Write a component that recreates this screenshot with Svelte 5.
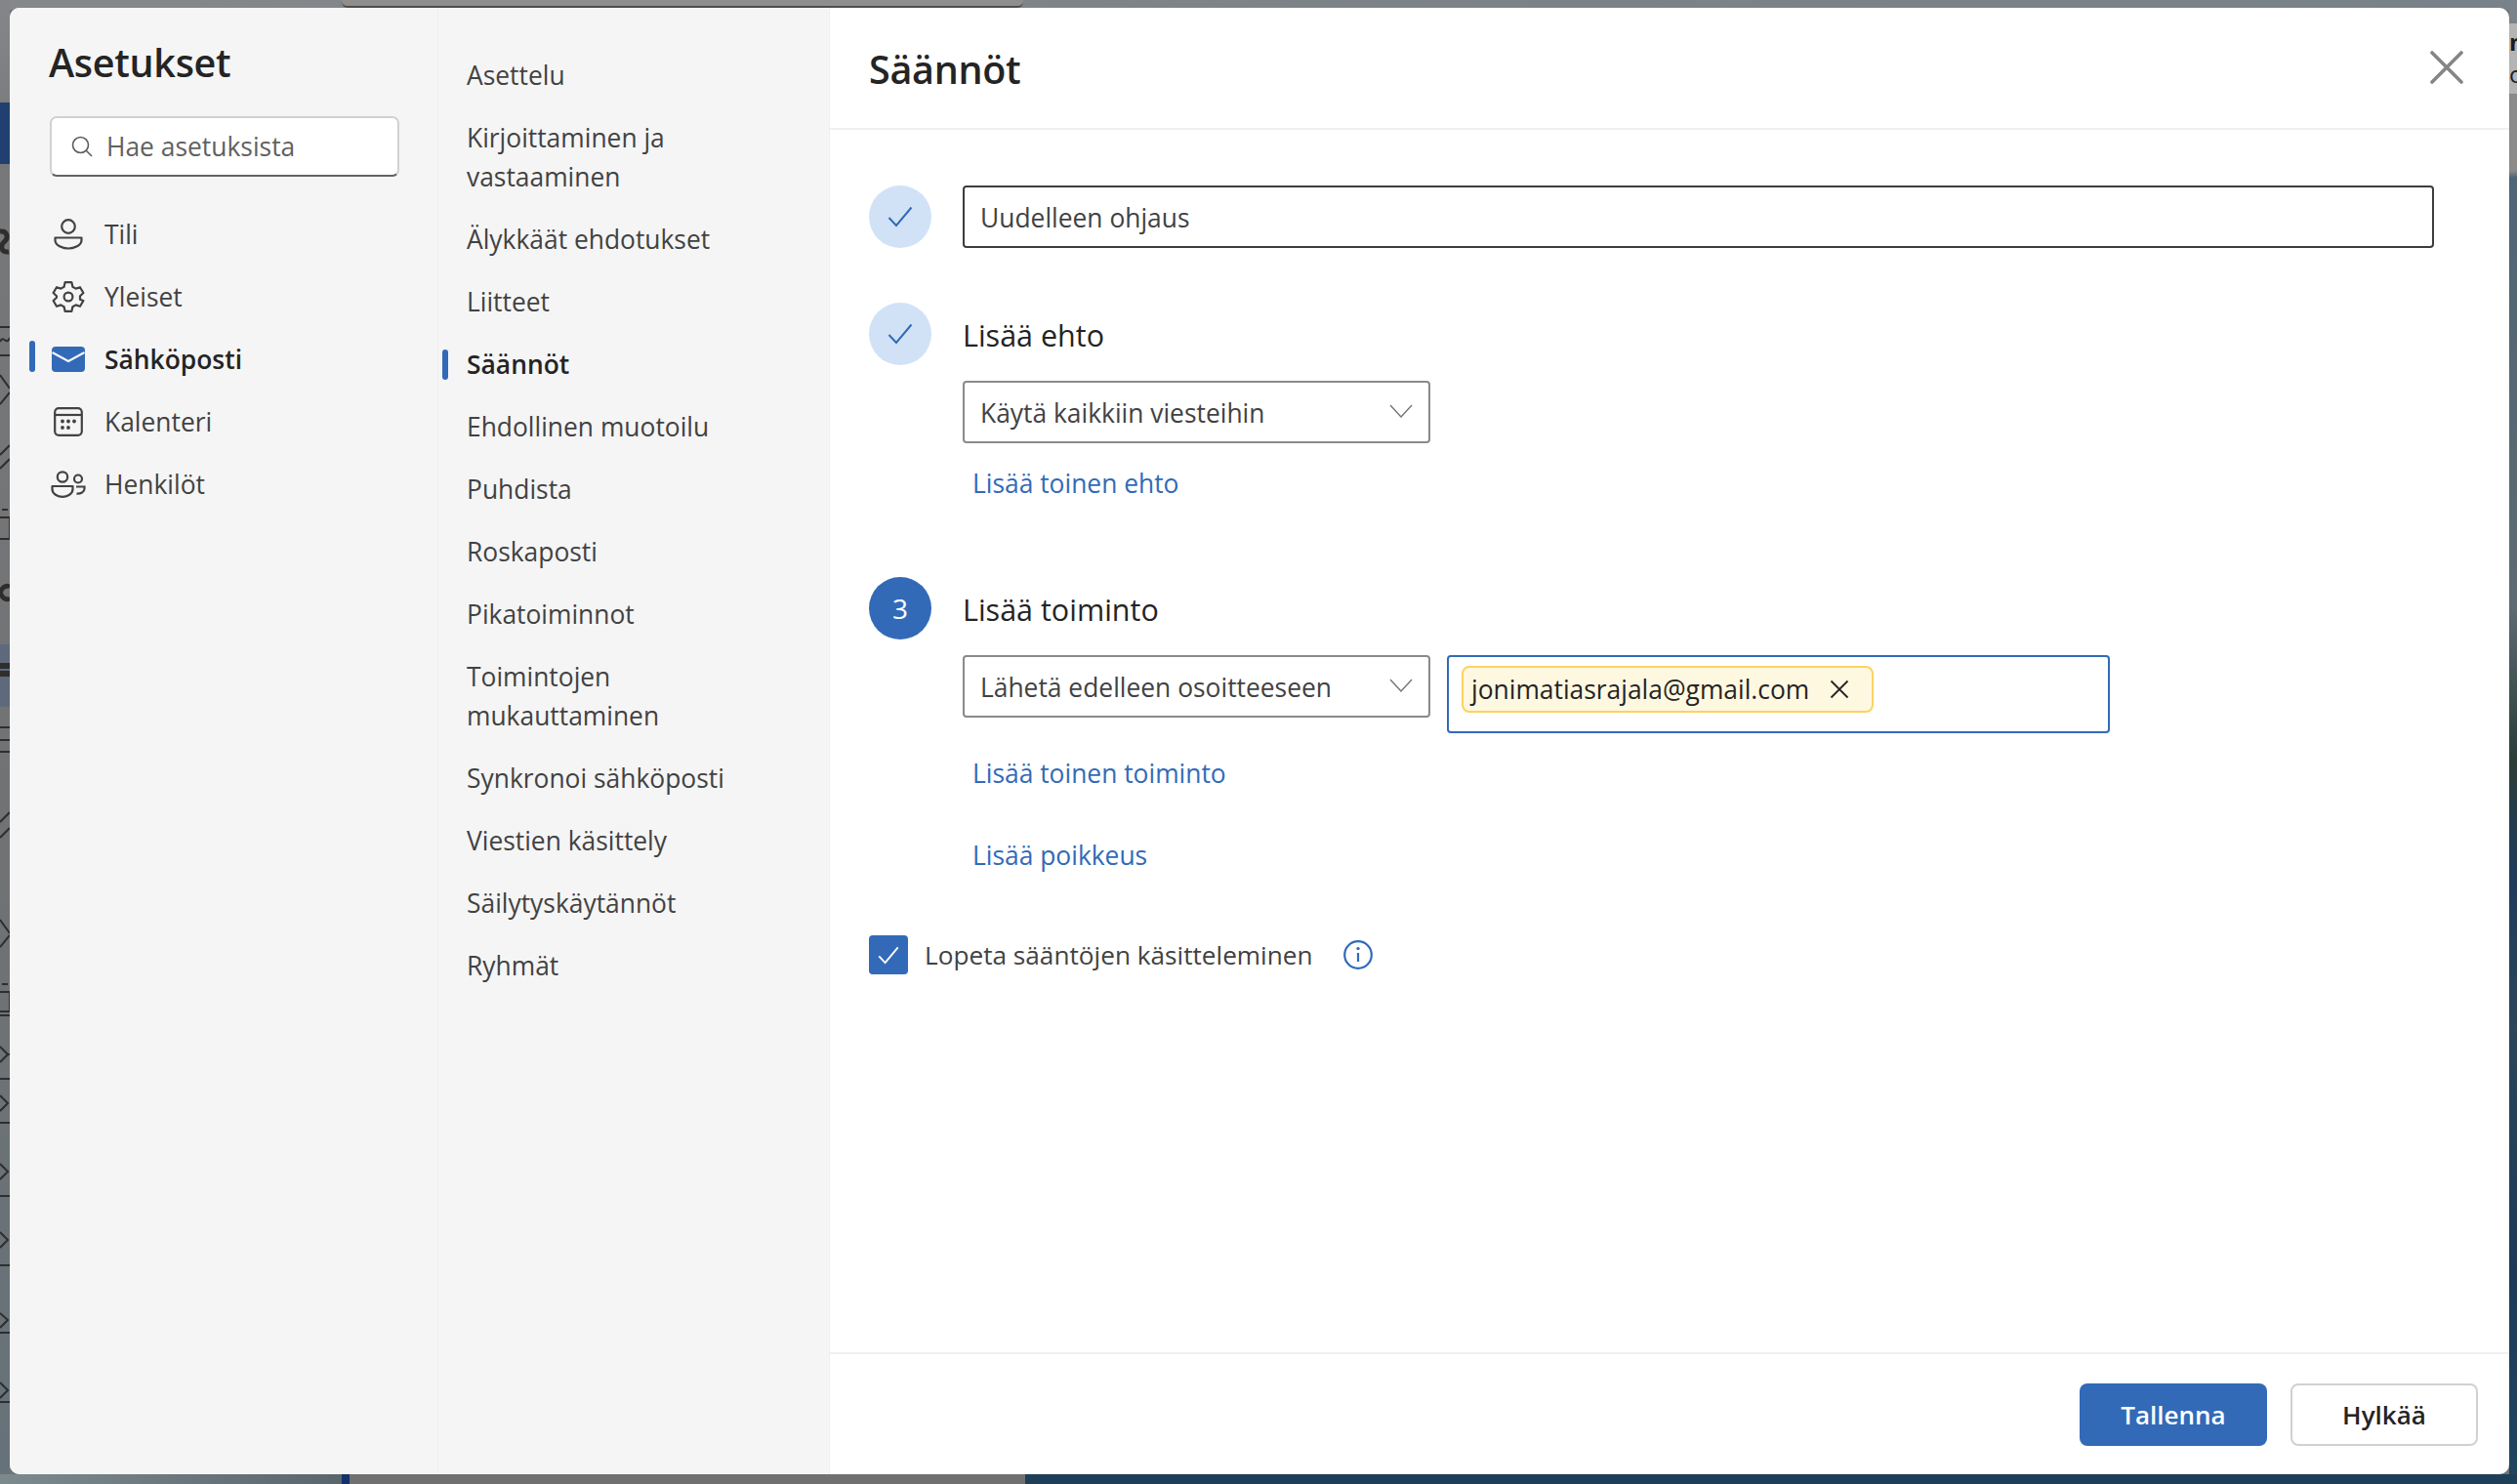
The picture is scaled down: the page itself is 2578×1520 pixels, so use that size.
<script>
	const accountItems = [
		{ id: 'user', label: 'Tili' },
		{ id: 'gear', label: 'Yleiset' },
		{ id: 'mail', label: 'Sähköposti', active: true },
		{ id: 'calendar', label: 'Kalenteri' },
		{ id: 'people', label: 'Henkilöt' }
	];

	const mailItems = [
		{ label: 'Asettelu' },
		{ label: 'Kirjoittaminen ja vastaaminen' },
		{ label: 'Älykkäät ehdotukset' },
		{ label: 'Liitteet' },
		{ label: 'Säännöt', active: true },
		{ label: 'Ehdollinen muotoilu' },
		{ label: 'Puhdista' },
		{ label: 'Roskaposti' },
		{ label: 'Pikatoiminnot' },
		{ label: 'Toimintojen mukauttaminen' },
		{ label: 'Synkronoi sähköposti' },
		{ label: 'Viestien käsittely' },
		{ label: 'Säilytyskäytännöt' },
		{ label: 'Ryhmät' }
	];
</script>

{#snippet check()}
	<svg class="check" viewBox="0 0 26 22" width="26" height="22" fill="none">
		<path d="M1.5 12 L9 20 L24.5 1.5" stroke="currentColor" stroke-width="2" />
	</svg>
{/snippet}

{#snippet chevron()}
	<svg class="chevron" viewBox="0 0 24 14" width="24" height="14" fill="none">
		<path d="M1 1 L12 13 L23 1" stroke="#757575" stroke-width="1.4" />
	</svg>
{/snippet}

<div class="page">
	<div class="backdrop" aria-hidden="true">
		<div class="bd-top"></div>
		<div class="bd-search"></div>
		<div class="bd-left"></div>
		<div class="bd-navy"></div>
		<div class="bd-band"></div>
		<div class="bd-right">
			<span class="bd-text one">ne</span>
			<span class="bd-text two">oo</span>
		</div>
		<div class="bd-bottom-left"></div>
		<div class="bd-bottom-bar"></div>
		<div class="bd-bottom-mid"></div>
		<div class="bd-bottom-right"></div>
		<!-- bits of the mail list that peek out beside the dialog -->
		<svg class="bd-marks" viewBox="0 0 10 1510" width="10" height="1510" fill="none" stroke="#2e2e2e" stroke-width="2">
			<path d="M0 237 C8 236 9 244 4 248 C0 252 1 259 9 258" stroke-width="5" />
			<path d="M0 335 H10 M0 350 C4 342 6 355 10 346 M0 364 H10" />
			<path d="M0 384 L10 398 M0 414 L10 402" />
			<path d="M0 466 L10 456 M0 480 L10 470" />
			<path d="M2 522 H8 M0 530 H10 V552 H0" />
			<path d="M0 607 C4 598 9 600 10 602 M0 607 C4 616 9 614 10 612" stroke-width="5" />
			<path d="M0 682 H10 M0 690 H10" stroke-width="6" />
			<path d="M0 745 H10 M0 758 H10 M0 770 H10" />
			<path d="M0 842 L10 832 M0 858 L10 848" />
			<path d="M0 942 L10 956 M0 970 L10 958" />
			<path d="M2 1008 H8 M0 1016 H10 V1036 H0" />
			<path d="M0 1072 L8 1080 L0 1088 M8 1080 H10 M0 1122 L8 1130 L0 1138 M0 1192 L8 1200 L0 1208 M0 1262 L8 1270 L0 1278 M0 1345 L8 1352 L0 1360 M0 1416 L8 1424 L0 1432" />
			<path d="M0 1040 H10 M0 1105 H10 M0 1150 H10 M0 1225 H10 M0 1296 H10 M0 1365 H10 M0 1436 H10" />
		</svg>
	</div>

	<div class="dialog">
		<aside class="col-accounts">
			<h1>Asetukset</h1>
			<div class="search">
				<svg viewBox="0 0 22 22" width="22" height="22" fill="none">
					<circle cx="9.5" cy="9.5" r="8" stroke="#5c5c5c" stroke-width="1.6" />
					<path d="M15.5 15.5 L21 21" stroke="#5c5c5c" stroke-width="1.6" />
				</svg>
				<span>Hae asetuksista</span>
			</div>
			<nav class="accounts">
				{#each accountItems as item}
					<div class="acc-row" class:active={item.active}>
						<span class="acc-icon">
							{#if item.id === 'user'}
								<svg viewBox="0 0 30 32" width="30" height="32" fill="none" stroke="#424242" stroke-width="2.2">
									<circle cx="15" cy="8" r="6.8" />
									<path d="M1.5 19.5 H28.5 V22 C28.5 27.5 21 30.5 15 30.5 C9 30.5 1.5 27.5 1.5 22 Z" stroke-linejoin="round" />
								</svg>
							{:else if item.id === 'gear'}
								<svg viewBox="0 0 34 34" width="34" height="34" fill="none" stroke="#424242" stroke-width="2.2" stroke-linejoin="round">
									<path d="M13.6 2.2 H20.4 L21.4 6.8 L24.6 8.6 L29 7.2 L32.4 13 L29 16.2 V19.8 L32.4 21 L29 26.8 L24.6 25.4 L21.4 27.2 L20.4 31.8 H13.6 L12.6 27.2 L9.4 25.4 L5 26.8 L1.6 21 L5 17.8 V16.2 L1.6 13 L5 7.2 L9.4 8.6 L12.6 6.8 Z" />
									<circle cx="17" cy="17" r="4.4" />
								</svg>
							{:else if item.id === 'mail'}
								<svg viewBox="0 0 34 26" width="34" height="26">
									<rect width="34" height="26" rx="4" fill="#326ab8" />
									<path d="M0.5 6 L17 15 L33.5 6" fill="none" stroke="#f5f5f5" stroke-width="2.2" />
								</svg>
							{:else if item.id === 'calendar'}
								<svg viewBox="0 0 30 30" width="30" height="30" fill="none" stroke="#424242" stroke-width="2.2">
									<rect x="1.2" y="1.2" width="27.6" height="27.6" rx="4" />
									<path d="M1.2 8 H28.8" />
									<g fill="#424242" stroke="none">
										<circle cx="9" cy="14.5" r="1.9" /><circle cx="15" cy="14.5" r="1.9" /><circle cx="21" cy="14.5" r="1.9" />
										<circle cx="9" cy="21" r="1.9" /><circle cx="15" cy="21" r="1.9" />
									</g>
								</svg>
							{:else}
								<svg viewBox="0 0 36 28" width="36" height="28" fill="none" stroke="#424242" stroke-width="2.2">
									<circle cx="12" cy="6.5" r="5.2" />
									<path d="M1.5 16 H22.5 V19 C22.5 24 17 26.8 12 26.8 C7 26.8 1.5 24 1.5 19 Z" stroke-linejoin="round" />
									<circle cx="28" cy="8.5" r="4" />
									<path d="M26 16.5 H34.5 V18.5 C34.5 22 30.5 24 26.5 23.6" />
								</svg>
							{/if}
						</span>
						<span>{item.label}</span>
					</div>
				{/each}
			</nav>
		</aside>

		<aside class="col-sections">
			{#each mailItems as item}
				<div class="sec-row" class:active={item.active}>{item.label}</div>
			{/each}
		</aside>

		<main class="col-main">
			<header>
				<h2>Säännöt</h2>
				<svg class="close" viewBox="0 0 34 34" width="34" height="34" fill="none">
					<path d="M2 2 L32 32 M32 2 L2 32" stroke="#858585" stroke-width="3.6" stroke-linecap="round" />
				</svg>
			</header>

			<div class="form">
				<section class="step name-step">
					<div class="badge done">{@render check()}</div>
					<div class="name-input">Uudelleen ohjaus</div>
				</section>

				<section class="step condition-step">
					<div class="badge done">{@render check()}</div>
					<div class="step-body">
						<h3>Lisää ehto</h3>
						<div class="select">Käytä kaikkiin viesteihin {@render chevron()}</div>
						<a class="link first-link" href="#ehto">Lisää toinen ehto</a>
					</div>
				</section>

				<section class="step action-step">
					<div class="badge current">3</div>
					<div class="step-body">
						<h3>Lisää toiminto</h3>
						<div class="action-row">
							<div class="select">Lähetä edelleen osoitteeseen {@render chevron()}</div>
							<div class="recipient">
								<span class="chip">
									jonimatiasrajala@gmail.com
									<svg viewBox="0 0 20 20" width="20" height="20" fill="none">
										<path d="M1.5 1.5 L18.5 18.5 M18.5 1.5 L1.5 18.5" stroke="#242424" stroke-width="1.8" />
									</svg>
								</span>
							</div>
						</div>
						<a class="link first-link" href="#toiminto">Lisää toinen toiminto</a>
						<a class="link second-link" href="#poikkeus">Lisää poikkeus</a>
					</div>
				</section>

				<div class="stop">
					<span class="box">
						<svg viewBox="0 0 26 22" width="22" height="19" fill="none">
							<path d="M1.5 12 L9 20 L24.5 1.5" stroke="#fff" stroke-width="2.2" />
						</svg>
					</span>
					<span class="stop-label">Lopeta sääntöjen käsitteleminen</span>
					<svg class="info" viewBox="0 0 30 30" width="30" height="30" fill="none">
						<circle cx="15" cy="15" r="13.8" stroke="#326ab8" stroke-width="2.2" />
						<path d="M15 13 V22" stroke="#326ab8" stroke-width="2.2" />
						<circle cx="15" cy="8.6" r="1.7" fill="#326ab8" />
					</svg>
				</div>
			</div>

			<footer>
				<button class="primary">Tallenna</button>
				<button class="secondary">Hylkää</button>
			</footer>
		</main>
	</div>
</div>

<style>
	:global(body) {
		margin: 0;
		background: #737475;
	}
	.page {
		position: relative;
		width: 2578px;
		height: 1520px;
		overflow: hidden;
		font-family: 'Open Sans', 'Noto Sans', sans-serif;
		color: #242424;
	}
	.backdrop div {
		position: absolute;
	}
	.bd-top {
		left: 0;
		top: 0;
		right: 0;
		height: 10px;
		background: linear-gradient(90deg, #85888b, #7d8387 50%, #78828a);
	}
	.bd-search {
		left: 350px;
		top: 0;
		width: 698px;
		height: 6px;
		background: #8f8e8d;
		border-bottom: 2px solid #4e4e4e;
		border-radius: 0 0 6px 6px;
	}
	.bd-left {
		left: 0;
		top: 0;
		width: 10px;
		bottom: 0;
		background: linear-gradient(180deg, #85868a, #777879 170px, #717273 55%, #66727a);
	}
	.bd-navy {
		left: 0;
		top: 105px;
		width: 10px;
		height: 63px;
		background: #1f4070;
	}
	.bd-band {
		left: 0;
		top: 660px;
		width: 10px;
		height: 64px;
		background: #5e6a7c;
	}
	.bd-marks {
		position: absolute;
		left: 0;
		top: 0;
	}
	.bd-right {
		right: 0;
		top: 0;
		width: 8px;
		bottom: 0;
		overflow: hidden;
		background: linear-gradient(180deg, #7a838a 0, #7a838a 24px, #b4b4b4 24px, #b4b4b4 96px, #8a8a8a 96px, #8a8a8a 175px, #4f6475 182px, #5d6b72 620px, #2a3d38 780px, #1f3b5c 900px, #2b4659 1050px, #1c3a58 1300px, #1f4560 1520px);
	}
	.bd-text {
		position: absolute;
		left: 0;
		font-size: 24px;
		line-height: 30px;
		color: #1c1c1c;
	}
	.bd-text.one {
		top: 28px;
		font-weight: 700;
	}
	.bd-text.two {
		top: 61px;
	}
	.bd-bottom-left {
		left: 0;
		top: 1510px;
		width: 350px;
		height: 10px;
		background: linear-gradient(90deg, #7d8a8d, #5a666c);
	}
	.bd-bottom-bar {
		left: 350px;
		top: 1510px;
		width: 8px;
		height: 10px;
		background: #12326a;
	}
	.bd-bottom-mid {
		left: 358px;
		top: 1510px;
		width: 692px;
		height: 10px;
		background: #707070;
	}
	.bd-bottom-right {
		left: 1050px;
		top: 1510px;
		right: 0;
		height: 10px;
		background: #1e3f58;
	}

	/* dialog sits on top of the dimmed mail view */
	.dialog {
		position: absolute;
		left: 10px;
		top: 8px;
		width: 2560px;
		height: 1502px;
		display: flex;
		border-radius: 10px;
		overflow: hidden;
		background: #fff;
	}
	.col-accounts {
		width: 439px;
		flex: none;
		box-sizing: border-box;
		padding: 32px 0 0 20px;
		background: #f5f5f5;
		border-right: 1px solid #efefef;
	}
	h1 {
		margin: 0 0 0 20px;
		font-size: 39.5px;
		line-height: 48px;
		font-weight: 600;
		letter-spacing: -0.3px;
	}
	.search {
		display: flex;
		align-items: center;
		gap: 14px;
		box-sizing: border-box;
		width: 358px;
		height: 62px;
		margin: 31px 0 0 21px;
		padding-left: 20px;
		background: #fff;
		border: 2px solid #d1d1d1;
		border-bottom-color: #616161;
		border-radius: 7px;
		font-size: 26.4px;
		color: #616161;
	}
	.accounts {
		margin-top: 27px;
	}
	.acc-row {
		position: relative;
		display: flex;
		align-items: center;
		height: 64px;
		font-size: 26.4px;
		color: #424242;
	}
	.acc-row.active {
		font-weight: 600;
		color: #242424;
	}
	.acc-row.active::before {
		content: '';
		position: absolute;
		left: 0;
		top: 13px;
		width: 6px;
		height: 32px;
		border-radius: 3px;
		background: #326ab8;
	}
	.acc-icon {
		display: flex;
		justify-content: center;
		width: 36px;
		margin: 0 19px 0 22px;
	}
	.col-sections {
		width: 401px;
		flex: none;
		box-sizing: border-box;
		padding: 37px 60px 0 29px;
		background: #f5f5f5;
		border-right: 1px solid #efefef;
	}
	.sec-row {
		position: relative;
		padding: 12px 0;
		font-size: 26.4px;
		line-height: 40px;
		color: #424242;
	}
	.sec-row.active {
		font-weight: 600;
		color: #242424;
	}
	.sec-row.active::before {
		content: '';
		position: absolute;
		left: -25px;
		top: 17px;
		width: 6px;
		height: 31px;
		border-radius: 3px;
		background: #326ab8;
	}
	.col-main {
		flex: 1;
		display: flex;
		flex-direction: column;
		min-width: 0;
	}
	header {
		display: flex;
		align-items: center;
		justify-content: space-between;
		box-sizing: border-box;
		height: 125px;
		padding: 0 47px 0 40px;
		border-bottom: 2px solid #f0f0f0;
	}
	h2 {
		margin: 2px 0 0;
		font-size: 39.5px;
		font-weight: 600;
		letter-spacing: -0.3px;
	}
	.close {
		margin-top: -2px;
	}
	.form {
		flex: 1;
		padding: 57px 0 0 40px;
	}
	.step {
		display: flex;
		gap: 32px;
	}
	.badge {
		flex: none;
		display: flex;
		align-items: center;
		justify-content: center;
		width: 64px;
		height: 64px;
		border-radius: 50%;
		font-size: 28px;
	}
	.badge.done {
		background: #d1e2f7;
		color: #326ab8;
	}
	.badge.current {
		background: #326ab8;
		color: #fff;
	}
	.name-input {
		box-sizing: border-box;
		width: 1507px;
		height: 64px;
		padding-left: 16px;
		line-height: 63px;
		font-size: 26.4px;
		color: #424242;
		border: 2px solid #3d3d3d;
		border-radius: 4px;
	}
	.condition-step {
		margin-top: 56px;
	}
	.action-step {
		margin-top: 76px;
	}
	h3 {
		margin: 0;
		padding-top: 2px;
		font-size: 30.5px;
		line-height: 62px;
		font-weight: 400;
		color: #242424;
	}
	.step-body {
		min-width: 0;
	}
	.select {
		display: flex;
		align-items: center;
		justify-content: space-between;
		box-sizing: border-box;
		width: 479px;
		height: 64px;
		margin-top: 16px;
		padding: 1px 16px 0 16px;
		font-size: 26.4px;
		color: #424242;
		border: 2px solid #8a8a8a;
		border-radius: 4px;
	}
	.chevron {
		margin-top: -3px;
	}
	.link {
		display: block;
		margin-left: 10px;
		font-size: 26.4px;
		line-height: 40px;
		color: #326ab8;
		text-decoration: none;
	}
	.first-link {
		margin-top: 21px;
	}
	.second-link {
		margin-top: 44px;
	}
	.action-row {
		display: flex;
		align-items: flex-start;
		gap: 17px;
	}
	.recipient {
		box-sizing: border-box;
		width: 679px;
		height: 80px;
		margin-top: 16px;
		padding: 9px 13px;
		border: 2px solid #326ab8;
		border-radius: 4px;
	}
	.chip {
		display: inline-flex;
		align-items: center;
		gap: 21px;
		box-sizing: border-box;
		height: 48px;
		padding: 0 23px 0 8px;
		font-size: 26.4px;
		background: #fff8e1;
		border: 2px solid #fcd35f;
		border-radius: 8px;
	}
	.stop {
		display: flex;
		align-items: center;
		margin-top: 62px;
	}
	.box {
		display: flex;
		align-items: center;
		justify-content: center;
		width: 40px;
		height: 40px;
		border-radius: 4px;
		background: #326ab8;
	}
	.stop-label {
		margin-left: 17px;
		font-size: 26.2px;
		color: #424242;
	}
	.info {
		margin-left: 31px;
		margin-top: -1px;
	}
	footer {
		display: flex;
		justify-content: flex-end;
		gap: 24px;
		box-sizing: border-box;
		height: 125px;
		padding: 30px 32px 0 0;
		border-top: 2px solid #f0f0f0;
	}
	button {
		box-sizing: border-box;
		width: 192px;
		height: 64px;
		font: 600 26px 'Open Sans', 'Noto Sans', sans-serif;
		border-radius: 8px;
	}
	.primary {
		background: #326ab8;
		border: none;
		color: #fff;
	}
	.secondary {
		background: #fff;
		border: 2px solid #d1d1d1;
		color: #242424;
	}
</style>
